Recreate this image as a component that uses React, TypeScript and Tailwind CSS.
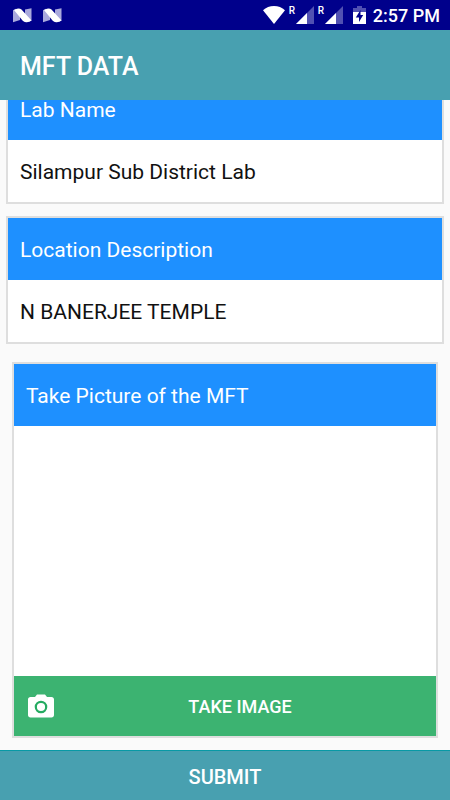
import type { ReactNode } from "react"

const FIELDS = [
  { id: "lab-name", label: "Lab Name", value: "Silampur Sub District Lab" },
  { id: "location", label: "Location Description", value: "N BANERJEE TEMPLE" },
]

function NougatIcon() {
  return (
    <svg viewBox="0 0 19 15" className="h-[15px] w-[19px]" aria-hidden="true">
      <path d="M0 2.200 3 0.800 7 5v7L0 14.200z" fill="#a9a9dc" />
      <path d="M12 1.500 18.500 0.300v12.500L16 13.500 12 9z" fill="#a9a9dc" />
      <path d="M1 2 4 0.700Q6.500 0 8.500 1.500L18.500 12.600Q16 14.500 13 14.200 11 14 9.500 12.500z" fill="#fff" />
    </svg>
  )
}

function WifiIcon() {
  return (
    <svg viewBox="0 0 22 18" className="h-[18px] w-[22px]" aria-hidden="true">
      <path d="M11 18 0 4.200C3 1.600 6.800 0 11 0s8 1.600 11 4.200z" fill="#fff" />
    </svg>
  )
}

function SignalIcon() {
  return (
    <div className="flex items-start">
      <span className="w-[7px] text-[10px] leading-[10px] font-medium">R</span>
      <svg viewBox="0 0 18 18" className="h-[18px] w-[18px]" aria-hidden="true">
        <path d="M18 0v18H0z" fill="#5151b2" />
        <path d="M11 7v11H0z" fill="#fff" />
      </svg>
    </div>
  )
}

function BatteryIcon() {
  return (
    <svg viewBox="0 0 13 18" className="h-[18px] w-[13px]" aria-hidden="true">
      <path d="M4 0h5v2h4v4H0V2h4z" fill="#5151b2" />
      <path d="M0 6h13v12H0z" fill="#fff" />
      <path d="M7.500 4 2.800 11.500h3.200V16l4.200-7H7.500z" fill="#00008b" />
    </svg>
  )
}

function CameraIcon() {
  return (
    <svg viewBox="0 0 26 24" className="h-6 w-[26px]" aria-hidden="true">
      <path
        d="M9 0.500h8L19 3H23.500C25 3 26 4 26 5.500v15.500c0 1.500-1 2.500-2.500 2.500h-21C1 23.500 0 22.500 0 21V5.500C0 4 1 3 2.500 3H7z"
        fill="#fff"
      />
      <circle cx="13" cy="13" r="5.200" fill="none" stroke="#25ab61" strokeWidth="2.200" />
    </svg>
  )
}

function CardTitle({ children }: { children: ReactNode }) {
  return <h2 className="flex h-[62px] items-center bg-[#1e90ff] px-3 pt-1 text-[21px] text-white">{children}</h2>
}

export default function App() {
  return (
    <div className="flex h-screen flex-col bg-[#fafafa] font-[Roboto,sans-serif]">
      <div className="flex h-[30px] shrink-0 items-center bg-[#00008b] pr-[10px] pl-[13px] text-white">
        <div className="flex gap-[11px]">
          <NougatIcon />
          <NougatIcon />
        </div>
        <div className="ml-auto flex items-center">
          <WifiIcon />
          <div className="ml-1 flex gap-1">
            <SignalIcon />
            <SignalIcon />
          </div>
          <div className="mr-[7px] ml-[10px]">
            <BatteryIcon />
          </div>
          <span className="pt-0.5 text-[18px] leading-[28px] font-medium">2:57 PM</span>
        </div>
      </div>

      <header className="flex h-[70px] shrink-0 items-center bg-[#48a0b0] px-5 pt-1">
        <h1 className="text-[25px] font-medium text-white">MFT DATA</h1>
      </header>

      {/* form is scrolled to its end, so the first card runs under the header */}
      <main className="flex min-h-0 flex-1 flex-col justify-end overflow-hidden pb-3">
        <div className="mx-[6px] mb-[18px] flex flex-col gap-3">
          {FIELDS.map((field) => (
            <section key={field.id} className="shrink-0 border-2 border-[#dedede] bg-white">
              <CardTitle>
                <label htmlFor={field.id}>{field.label}</label>
              </CardTitle>
              <input
                id={field.id}
                type="text"
                readOnly
                defaultValue={field.value}
                className="block h-[62px] w-full px-3 pt-0.5 text-[21px] text-[#111111] outline-none"
              />
            </section>
          ))}
        </div>

        <section className="mx-3 shrink-0 border-2 border-[#dedede] bg-white">
          <CardTitle>Take Picture of the MFT</CardTitle>
          <div className="h-[250px]" />
          <button type="button" className="flex h-[60px] w-full items-center bg-[#3cb371] pr-[10px] pl-[14px] text-white">
            <CameraIcon />
            <span className="flex-1 text-center text-[18px] font-medium">TAKE IMAGE</span>
          </button>
        </section>
      </main>

      <button
        type="button"
        className="h-[50px] shrink-0 border-t border-[#0899a5] bg-[#48a0b0] pt-0.5 text-[20px] font-medium text-white"
      >
        SUBMIT
      </button>
    </div>
  )
}
